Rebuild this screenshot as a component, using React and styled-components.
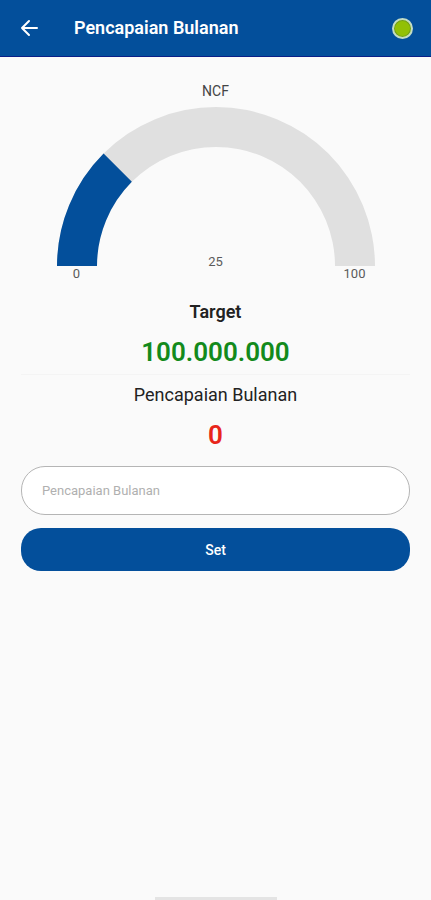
import React, { useState } from 'react'
import styled, { createGlobalStyle } from 'styled-components'

const GlobalStyle = createGlobalStyle`
*{
  box-sizing: border-box;
}
body{
  margin: 0px;
  background-color: #fafafa;
  color: #222;
  font-family: Roboto, "Liberation Sans", sans-serif;
}
`;

const Page = styled.div`
  min-height: 100vh;
  display: flex;
  flex-direction: column;
`;

const Header = styled.header`
  display: flex;
  align-items: center;
  height: 57px;
  padding: 0px 18px 0px 17px;
  background-color: #034f9b;
  border-bottom: 1px solid #0a1f88;
`;

const BackButton = styled.button`
  display: flex;
  padding: 0px;
  border: none;
  background: none;
  color: white;
  cursor: pointer;
`;

const Title = styled.h1`
  flex: 1;
  margin: 0px 0px 0px 33px;
  color: white;
  font-size: 18px;
  line-height: 24px;
  font-weight: 600;
`;

const StatusDot = styled.span`
  width: 21px;
  height: 21px;
  border-radius: 50%;
  border: 2px solid #c3dcc4;
  background-color: #92c005;
  box-shadow: inset 0px 0px 0px 1px #6f9c1c;
`;

const Content = styled.main`
  display: flex;
  flex-direction: column;
  padding: 26px 21px 0px;
`;

const Gauge = styled.figure`
  display: grid;
  width: 318px;
  max-width: 100%;
  margin: 0px auto;
  font-size: 13px;
  line-height: 16px;
  color: #5a5a5a;
`;

const GaugeTitle = styled.figcaption`
  margin-bottom: 8px;
  text-align: center;
  font-size: 14px;
  color: #444;
`;

const Arc = styled.svg`
  grid-area: 2 / 1;
  display: block;
  width: 100%;
`;

const GaugeValue = styled.span`
  grid-area: 2 / 1;
  align-self: end;
  justify-self: center;
  line-height: 8px;
`;

const Scale = styled.div`
  display: flex;
  justify-content: space-between;
`;

const ScaleLabel = styled.span`
  width: 40px;
  text-align: center;
`;

const Summary = styled.section`
  display: flex;
  flex-direction: column;
  align-items: center;
`;

const Label = styled.h2`
  margin: ${(props) => (props.$strong ? '18px' : '8px')} 0px 0px;
  font-size: 18px;
  line-height: 24px;
  font-weight: ${(props) => (props.$strong ? 600 : 400)};
`;

const Amount = styled.p`
  margin: 12px 0px 0px;
  color: ${(props) => props.$color};
  font-size: 26px;
  line-height: 32px;
  font-weight: 600;
`;

const Divider = styled.hr`
  margin: 6px 0px 0px;
  border: none;
  border-top: 1px solid #f4f4f4;
`;

const Form = styled.form`
  display: flex;
  flex-direction: column;
  gap: 13px;
  margin-top: 15px;
`;

const Input = styled.input`
  width: 100%;
  height: 49px;
  padding: 0px 20px;
  border: 1px solid #b5b5b5;
  border-radius: 24px;
  background-color: white;
  font-family: inherit;
  font-size: 13px;
  &::placeholder{
    color: #b0b0b0;
    opacity: 1;
  }
`;

const SetButton = styled.button`
  height: 43px;
  border: none;
  border-radius: 20px;
  background-color: #034f9b;
  color: white;
  font-family: inherit;
  font-size: 14px;
  font-weight: 500;
  cursor: pointer;
`;

const HomeBar = styled.div`
  width: 122px;
  height: 3px;
  margin: auto auto 0px;
  background-color: #e4e4e4;
`;

// point on the half circle, percent runs from left to right
function point(percent, radius) {
  const angle = Math.PI * (1 - percent / 100);
  return `${159 + radius * Math.cos(angle)} ${159 - radius * Math.sin(angle)}`;
}

function slice(percent) {
  return `M${point(0, 159)} A159 159 0 0 1 ${point(percent, 159)} L${point(percent, 119)} A119 119 0 0 0 ${point(0, 119)} Z`;
}

function App() {
  const [value, setValue] = useState('');
  const [total, setTotal] = useState('0');

  const submit = (e) => {
    e.preventDefault();
    if (value) setTotal(value);
  };

  return (
    <Page>
      <GlobalStyle />
      <Header>
        <BackButton type="button" aria-label="Kembali">
          <svg width="24" height="24" viewBox="0 0 24 24" fill="none" stroke="currentColor" strokeWidth="2" strokeLinecap="round" strokeLinejoin="round">
            <path d="M20 12H5M12 5l-7 7 7 7" />
          </svg>
        </BackButton>
        <Title>Pencapaian Bulanan</Title>
        <StatusDot />
      </Header>
      <Content>
        <Gauge>
          <GaugeTitle>NCF</GaugeTitle>
          <Arc viewBox="0 0 318 159" aria-hidden="true">
            <path d={slice(100)} fill="#e0e0e0" />
            <path d={slice(25)} fill="#034f9b" />
          </Arc>
          <GaugeValue>25</GaugeValue>
          <Scale>
            <ScaleLabel>0</ScaleLabel>
            <ScaleLabel>100</ScaleLabel>
          </Scale>
        </Gauge>
        <Summary>
          <Label $strong>Target</Label>
          <Amount $color="#138a1c">100.000.000</Amount>
        </Summary>
        <Divider />
        <Summary>
          <Label>Pencapaian Bulanan</Label>
          <Amount $color="#e8251a">{total}</Amount>
        </Summary>
        <Form onSubmit={submit}>
          <Input
            aria-label="Pencapaian Bulanan"
            placeholder="Pencapaian Bulanan"
            inputMode="numeric"
            value={value}
            onChange={(e) => setValue(e.target.value)}
          />
          <SetButton type="submit">Set</SetButton>
        </Form>
      </Content>
      <HomeBar />
    </Page>
  )
}

export default App
